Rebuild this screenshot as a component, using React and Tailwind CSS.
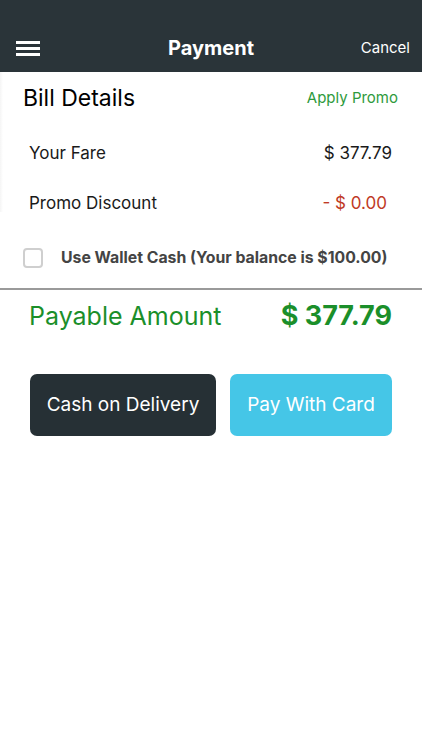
export default function App() {
  return (
    <div className="w-[422px] h-[750px] bg-white relative overflow-hidden" style={{ fontFamily: 'Inter, Roboto, "Liberation Sans", sans-serif' }}>
      <div className="h-[72px] bg-[#2a3439] flex items-end pb-[14px] px-4 relative">
        <div className="flex flex-col gap-[3px] w-6 mb-[2px]">
          <div className="h-[3px] bg-white" />
          <div className="h-[3px] bg-white" />
          <div className="h-[3px] bg-white" />
        </div>
        <div className="absolute left-0 right-0 bottom-[12px] text-center text-white text-[20px] leading-[24px] font-bold">Payment</div>
        <div className="ml-auto text-white text-[15px] mr-[-4px] leading-[20px]">Cancel</div>
      </div>
      <div className="absolute left-0 top-[72px] w-[3px] h-[140px] bg-gradient-to-r from-[#f5f5f5] to-white" />
      <div className="flex items-center justify-between pl-[23px] pr-[24px] pt-[12px]">
        <div className="text-[23px] text-black leading-[28px]">Bill Details</div>
        <div className="text-[15px] text-[#2e9a3c]">Apply Promo</div>
      </div>
      <div className="flex items-center justify-between pl-[29px] pr-[30px] mt-[29px] text-[17px] text-[#1a1a1a] leading-[24px]">
        <div>Your Fare</div>
        <div>$ 377.79</div>
      </div>
      <div className="flex items-center justify-between pl-[29px] pr-[35px] mt-[26px] text-[17px] leading-[24px]">
        <div className="text-[#1a1a1a]">Promo Discount</div>
        <div className="text-[#c03a25]">- $ 0.00</div>
      </div>
      <div className="flex items-center pl-[23px] mt-[33px]">
        <div className="w-[20px] h-[20px] rounded-[4px] border-2 border-[#cfcfcf]" />
        <div className="ml-[18px] text-[15.8px] leading-[20px] font-bold text-[#444]">Use Wallet Cash (Your balance is $100.00)</div>
      </div>
      <div className="mt-[20px] h-[2px] bg-[#9a9a9a]" />
      <div className="flex items-center justify-between pl-[29px] pr-[30px] mt-[10px] text-[#1b8f2a] leading-[32px]">
        <div className="text-[25px]">Payable Amount</div>
        <div className="text-[27px] font-bold">$ 377.79</div>
      </div>
      <div className="flex gap-[14px] pl-[30px] pr-[30px] mt-[42px]">
        <div className="w-[186px] h-[62px] rounded-[7px] bg-[#263035] text-white text-[19px] flex items-center justify-center">Cash on Delivery</div>
        <div className="w-[162px] h-[62px] rounded-[7px] bg-[#45c6e7] text-white text-[19px] flex items-center justify-center">Pay With Card</div>
      </div>
    </div>
  );
}
